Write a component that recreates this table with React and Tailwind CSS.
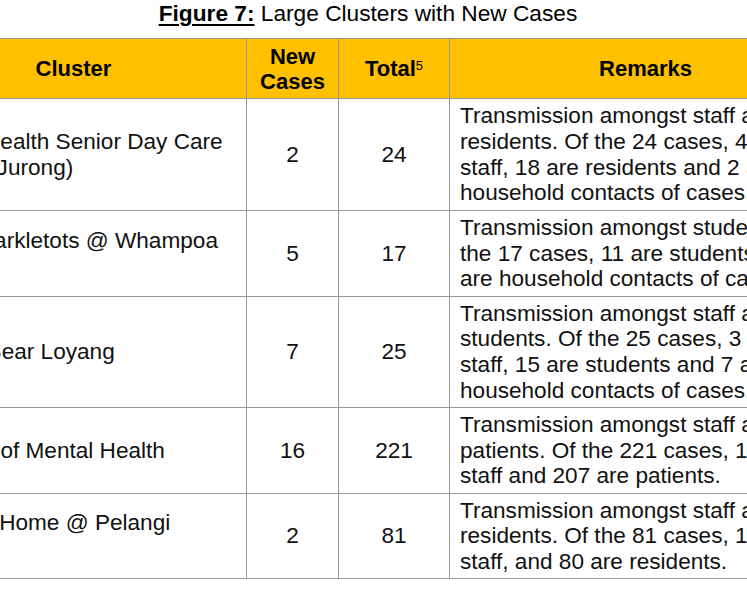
const rows = [
  {
    cluster: ["NTUC Health Senior Day Care", "Centre (Jurong)"],
    newCases: "2",
    total: "24",
    remarks: [
      "Transmission amongst staff and",
      "residents. Of the 24 cases, 4 are",
      "staff, 18 are residents and 2 are",
      "household contacts of cases.",
    ],
    height: "h-[112px]",
  },
  {
    cluster: ["PCF Sparkletots @ Whampoa", "(Blk 89)"],
    newCases: "5",
    total: "17",
    remarks: [
      "Transmission amongst students. Of",
      "the 17 cases, 11 are students and 6",
      "are household contacts of cases.",
    ],
    height: "h-[86px]",
  },
  {
    cluster: ["Kinder Bear Loyang"],
    newCases: "7",
    total: "25",
    remarks: [
      "Transmission amongst staff and",
      "students. Of the 25 cases, 3 are",
      "staff, 15 are students and 7 are",
      "household contacts of cases.",
    ],
    height: "h-[111px]",
  },
  {
    cluster: ["Institute of Mental Health"],
    newCases: "16",
    total: "221",
    remarks: [
      "Transmission amongst staff and",
      "patients. Of the 221 cases, 14 are",
      "staff and 207 are patients.",
    ],
    height: "h-[86px]",
  },
  {
    cluster: ["Nursing Home @ Pelangi", "Village"],
    newCases: "2",
    total: "81",
    remarks: [
      "Transmission amongst staff and",
      "residents. Of the 81 cases, 1 is",
      "staff, and 80 are residents.",
    ],
    height: "h-[85px]",
  },
];

const Lines = ({ lines }) => (
  <div className="flex flex-col">
    {lines.map((line) => (
      <span key={line} className="whitespace-nowrap">
        {line}
      </span>
    ))}
  </div>
);

export default function App() {
  return (
    <div className="w-[747px] h-[598px] overflow-hidden bg-white text-[#111] font-['Liberation_Sans',Arial,sans-serif]">
      <div className="h-[38px] pr-[11px] text-center text-[22.7px] leading-[26px] text-black">
        <span className="font-bold underline decoration-2 underline-offset-[3px]">Figure 7:</span>{" "}
        Large Clusters with New Cases
      </div>

      <div className="ml-[-99px] w-[940px] border-t border-[#999] text-[22.6px] leading-[25.6px]">
        {/* header */}
        <div className="grid h-[60px] grid-cols-[346px_92px_111px_391px] border-b border-[#999] bg-[#ffc000] text-[22px] font-bold leading-[25px] text-black">
          <div className="flex items-center justify-center border-r border-[#999]">Cluster</div>
          <div className="flex flex-col items-center justify-center border-r border-[#999]">
            <span>New</span>
            <span>Cases</span>
          </div>
          <div className="flex items-center justify-center border-r border-[#999]">
            <span>
              Total<sup className="text-[13px] font-normal">5</sup>
            </span>
          </div>
          <div className="flex items-center justify-center">Remarks</div>
        </div>

        {rows.map((row) => (
          <div
            key={row.total}
            className={`grid grid-cols-[346px_92px_111px_391px] border-b border-[#999] ${row.height}`}
          >
            <div className="flex items-center border-r border-[#999] pl-[14px]">
              <Lines lines={row.cluster} />
            </div>
            <div className="flex items-center justify-center border-r border-[#999]">{row.newCases}</div>
            <div className="flex items-center justify-center border-r border-[#999]">{row.total}</div>
            <div className="flex items-center pl-[10px]">
              <Lines lines={row.remarks} />
            </div>
          </div>
        ))}
      </div>
    </div>
  );
}
